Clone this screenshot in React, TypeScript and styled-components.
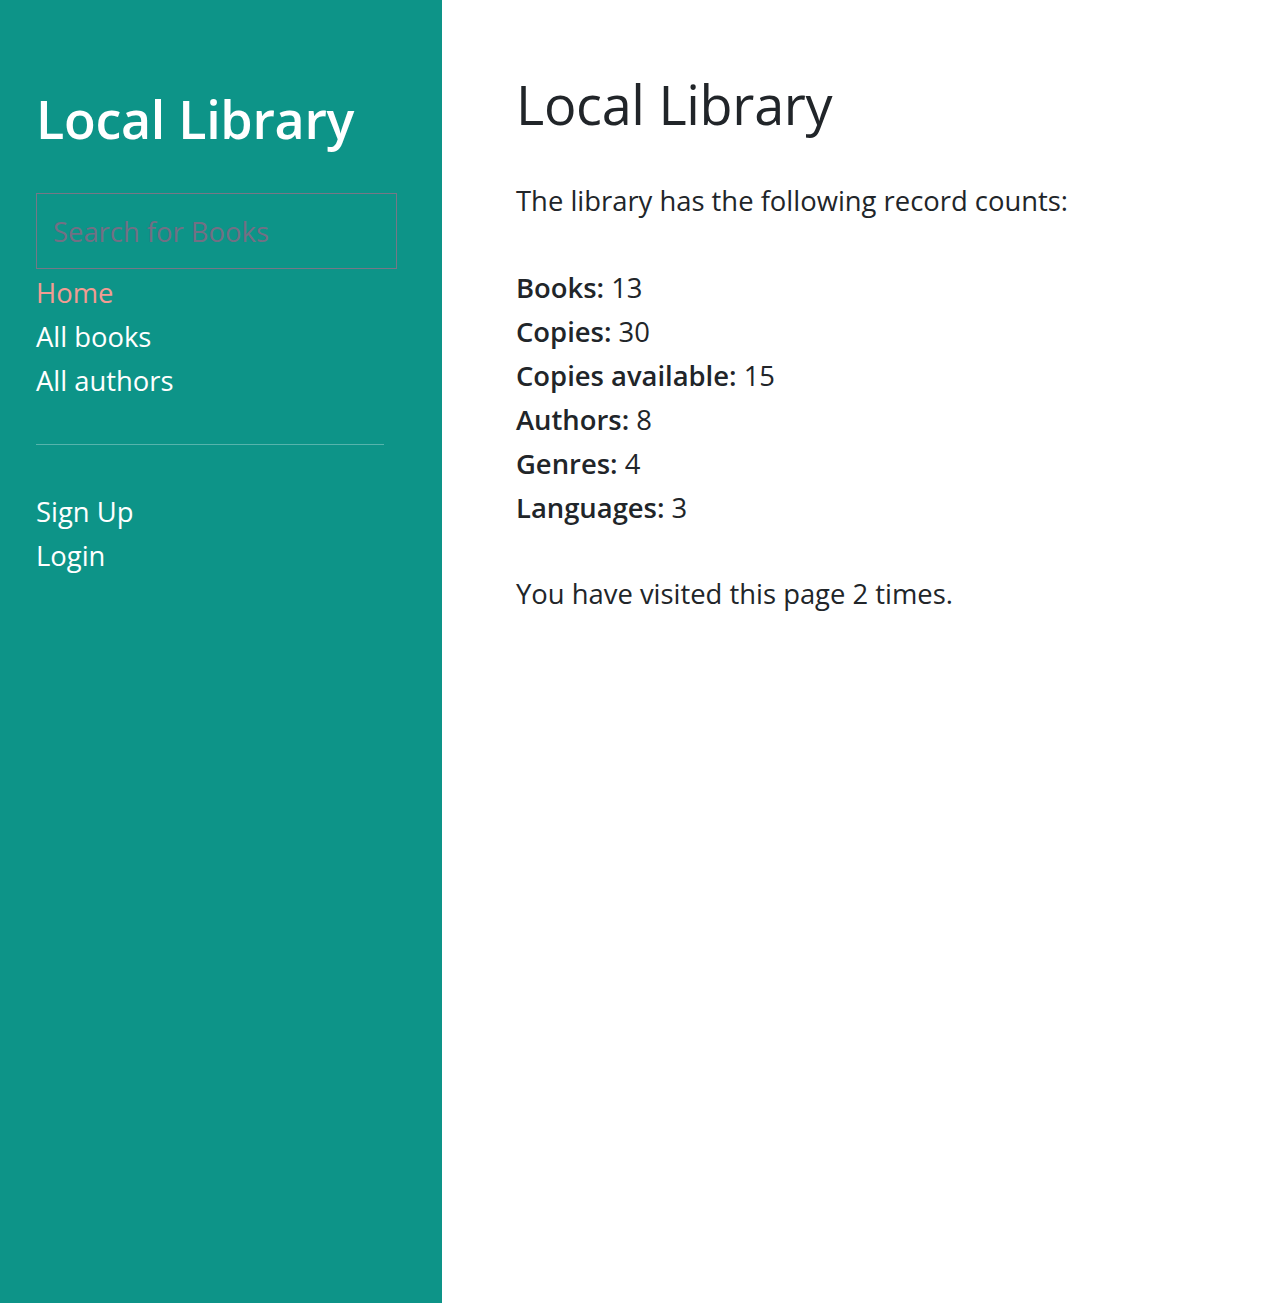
import React from "react";
import styled, { createGlobalStyle } from "styled-components";

const GlobalStyle = createGlobalStyle`
  html, body {
    margin: 0;
    padding: 0;
    background: #ffffff;
  }
  body {
    font-family: "Open Sans", "Noto Sans", "Liberation Sans", sans-serif;
    color: #212529;
  }
  * { box-sizing: border-box; }
`;

const Page = styled.div`
  display: grid;
  grid-template-columns: 442px 1fr;
  min-height: 1303px;
`;

const Sidebar = styled.aside`
  background: #0d9488;
  padding: 86px 36px 0 36px;
  display: flex;
  flex-direction: column;
`;

const SideTitle = styled.h1`
  margin: 0 0 42px 0;
  font-size: 52px;
  line-height: 65px;
  font-weight: 600;
  letter-spacing: -0.3px;
  color: #ffffff;
`;

const SearchInput = styled.input`
  width: 361px;
  height: 76px;
  margin-bottom: 2px;
  padding: 0 16px;
  background: transparent;
  border: 1px solid #767786;
  border-radius: 0;
  font-family: inherit;
  font-size: 27.4px;
  color: #ffffff;
  outline: none;
  &::placeholder {
    color: #736f84;
  }
`;

const NavList = styled.nav`
  display: flex;
  flex-direction: column;
`;

const NavLink = styled.a<{ $active?: boolean }>`
  display: block;
  font-size: 27.4px;
  line-height: 44px;
  color: ${(p) => (p.$active ? "#f29c93" : "#ffffff")};
  text-decoration: none;
`;

const Divider = styled.hr`
  width: 348px;
  margin: 41px 0 45px 0;
  border: 0;
  border-top: 1px solid rgba(255, 255, 255, 0.3);
`;

const Main = styled.main`
  padding: 72px 40px 0 74px;
`;

const Heading = styled.h1`
  margin: 0;
  font-size: 54px;
  line-height: 65px;
  font-weight: 500;
  letter-spacing: -0.3px;
  color: #212529;
`;

const Paragraph = styled.p<{ $top: number }>`
  margin: ${(p) => p.$top}px 0 0 0;
  font-size: 27.4px;
  line-height: 36px;
  color: #212529;
`;

const CountList = styled.ul`
  list-style: none;
  margin: 47px 0 0 0;
  padding: 0;
`;

const CountItem = styled.li`
  font-size: 27.4px;
  line-height: 44px;
  color: #212529;
`;

const Label = styled.strong`
  font-weight: 600;
`;

const counts: [string, number][] = [
  ["Books", 13],
  ["Copies", 30],
  ["Copies available", 15],
  ["Authors", 8],
  ["Genres", 4],
  ["Languages", 3],
];

export default function App() {
  return (
    <>
      <GlobalStyle />
      <Page>
        <Sidebar>
          <SideTitle>Local Library</SideTitle>
          <SearchInput type="text" placeholder="Search for Books" />
          <NavList>
            <NavLink href="#" $active>
              Home
            </NavLink>
            <NavLink href="#">All books</NavLink>
            <NavLink href="#">All authors</NavLink>
          </NavList>
          <Divider />
          <NavList>
            <NavLink href="#">Sign Up</NavLink>
            <NavLink href="#">Login</NavLink>
          </NavList>
        </Sidebar>
        <Main>
          <Heading>Local Library</Heading>
          <Paragraph $top={46}>The library has the following record counts:</Paragraph>
          <CountList>
            {counts.map(([label, value]) => (
              <CountItem key={label}>
                <Label>{label}:</Label> {value}
              </CountItem>
            ))}
          </CountList>
          <Paragraph $top={46}>You have visited this page 2 times.</Paragraph>
        </Main>
      </Page>
    </>
  );
}
